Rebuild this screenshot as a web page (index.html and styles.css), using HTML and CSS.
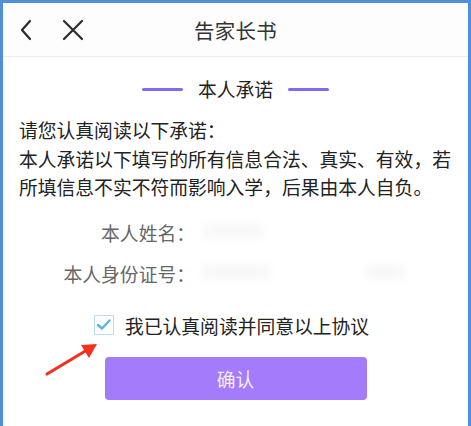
FILE: index.html
```html
<!DOCTYPE html>
<html lang="zh-CN">
<head>
<meta charset="utf-8">
<title>告家长书</title>
<link rel="stylesheet" href="styles.css">
</head>
<body>
<div class="frame">
  <header class="topbar">
    <div class="nav-left">
      <svg class="nav-icon" width="14" height="22" viewBox="0 0 14 22"><path d="M11 2 L3 11 L11 20" fill="none" stroke="#2b2b2b" stroke-width="2.2" stroke-linecap="round" stroke-linejoin="round"/></svg>
      <svg class="nav-icon close" width="22" height="22" viewBox="0 0 22 22"><path d="M2 2 L20 20 M20 2 L2 20" fill="none" stroke="#2b2b2b" stroke-width="2.2" stroke-linecap="round"/></svg>
    </div>
    <div class="title">告家长书</div>
    <div class="nav-right"></div>
  </header>

  <main class="content">
    <div class="section-title">
      <span class="bar"></span>
      <span class="section-text">本人承诺</span>
      <span class="bar"></span>
    </div>

    <p class="notice">请您认真阅读以下承诺：<br>本人承诺以下填写的所有信息合法、真实、有效，若所填信息不实不符而影响入学，后果由本人自负。</p>

    <div class="form">
      <div class="row">
        <span class="label">本人姓名：</span>
        <span class="value"><span class="blur b1"></span></span>
      </div>
      <div class="row">
        <span class="label">本人身份证号：</span>
        <span class="value"><span class="blur b2"></span><span class="blur b3"></span></span>
      </div>
    </div>

    <div class="agree">
      <span class="checkbox">
        <svg width="18" height="18" viewBox="0 0 18 18"><path d="M3 9 L7 12.5 L14.5 4.5" fill="none" stroke="#5db6e2" stroke-width="2.4" stroke-linecap="round" stroke-linejoin="round"/></svg>
      </span>
      <span class="agree-text">我已认真阅读并同意以上协议</span>
    </div>

    <div class="actions">
      <button class="confirm">确认</button>
    </div>

    <svg class="arrow" width="70" height="50" viewBox="0 0 70 50">
      <path d="M6 38 L46 14" stroke="#f2311f" stroke-width="3.2" stroke-linecap="round"/>
      <path d="M56 8 L40 9 L48 22 Z" fill="#f2311f"/>
    </svg>
  </main>
</div>
</body>
</html>
```

FILE: styles.css
```css
html, body {
  margin: 0;
  padding: 0;
  background: #ffffff;
}

body {
  font-family: "Noto Sans CJK SC", "Noto Sans", sans-serif;
  color: #222222;
}

.frame {
  box-sizing: border-box;
  width: 471px;
  height: 426px;
  border-top: 3px solid #4f8fd7;
  border-left: 3px solid #4f8fd7;
  border-right: 3px solid #4f8fd7;
  overflow: hidden;
}

.topbar {
  height: 53px;
  border-bottom: 1px solid #ececec;
  display: grid;
  grid-template-columns: 1fr auto 1fr;
  align-items: center;
  background: #fdfdfd;
}

.nav-left {
  display: flex;
  align-items: center;
  padding-left: 16px;
  gap: 29px;
}

.nav-icon {
  display: block;
}

.title {
  font-size: 20.5px;
  color: #333333;
  letter-spacing: 0.2px;
}

.content {
  position: relative;
}

.section-title {
  margin-top: 18px;
  height: 28px;
  display: flex;
  align-items: center;
  justify-content: center;
  gap: 15px;
}

.bar {
  width: 41px;
  height: 3px;
  border-radius: 2px;
  background: #7b6cf0;
}

.section-text {
  font-size: 18.8px;
  line-height: 28px;
  color: #222222;
}

.notice {
  margin: 13px 0 0 0;
  padding: 0 10px 0 16px;
  font-size: 18.8px;
  line-height: 28.5px;
  color: #222222;
}

.form {
  margin-top: 10px;
}

.row {
  height: 41px;
  display: grid;
  grid-template-columns: 192px 1fr;
  align-items: center;
}

.label {
  text-align: right;
  font-size: 18.8px;
  color: #666666;
}

.value {
  position: relative;
  height: 30px;
}

.blur {
  position: absolute;
  top: 7px;
  height: 14px;
  border-radius: 10px;
  background: #f7f7f7;
  filter: blur(4px);
}

.b1 { left: 8px; width: 60px; }
.b2 { left: 6px; width: 70px; }
.b3 { left: 170px; width: 40px; }

.agree {
  margin-top: 17.5px;
  height: 28px;
  display: flex;
  align-items: center;
  padding-left: 91px;
}

.checkbox {
  box-sizing: border-box;
  width: 20px;
  height: 20px;
  border: 1px solid #b9def0;
  display: flex;
  align-items: center;
  justify-content: center;
  margin-right: 11px;
}

.checkbox svg {
  display: block;
}

.agree-text {
  font-size: 18.8px;
  color: #222222;
}

.actions {
  margin-top: 18px;
  display: flex;
  justify-content: center;
}

.confirm {
  width: 262px;
  height: 43px;
  border: none;
  border-radius: 4px;
  background: #a47bfa;
  color: #f3eeff;
  font-family: "Noto Sans CJK SC", "Noto Sans", sans-serif;
  font-size: 18.8px;
  padding: 0;
}

.arrow {
  position: absolute;
  left: 38px;
  top: 261px;
}
```
